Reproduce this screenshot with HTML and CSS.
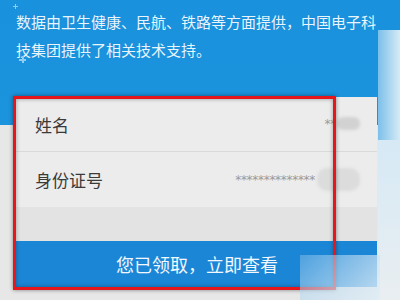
FILE: index.html
```html
<!DOCTYPE html>
<html lang="zh-CN">
  <head>
    <meta charset="UTF-8" />
    <meta name="viewport" content="width=device-width, initial-scale=1.0" />
    <title>健康码领取</title>
    <link rel="stylesheet" href="styles.css">
  </head>
  <body>
    <div class="screen">
      <div class="main">
        <div class="intro">
          <span class="plus plusTop"></span>
          <p>数据由卫生健康、民航、铁路等方面提供，中国电子科技集团提供了相关技术支持。</p>
          <span class="plus plusBottom"></span>
        </div>

        <div class="card">
          <div class="row">
            <span class="label">姓名</span>
            <span class="value">**</span>
            <span class="blur blurSmall"></span>
          </div>
          <div class="row">
            <span class="label">身份证号</span>
            <span class="value">**************</span>
            <span class="blur blurBig"></span>
          </div>
          <div class="spacer"></div>
          <button class="getBtn">您已领取，立即查看</button>

          <div class="markBox"></div>
        </div>
      </div>
      <div class="side"></div>
      <div class="glare"></div>
    </div>
  </body>
</html>
```

FILE: styles.css
```css
* {
  box-sizing: border-box;
}

body {
  margin: 0;
  font-family: "Noto Sans CJK SC", "Noto Sans", sans-serif;
}

.screen {
  position: relative;
  display: flex;
  width: 400px;
  height: 300px;
  overflow: hidden;
}

.main {
  width: 378px;
  background: linear-gradient(#1a91dc 0, #1c93dd 125px, #e7e7e7 125px);
}

.side {
  flex: 1;
  background: linear-gradient(#1a91dc 0, #1a91dc 30px, transparent 30px),
    linear-gradient(90deg, #7cbfe9, #d6ebf7);
  position: relative;
}
.side::after {
  content: "";
  position: absolute;
  left: 0;
  right: 0;
  top: 140px;
  bottom: 0;
  background: linear-gradient(#d6e9f5, #e9eef1);
}

.intro {
  position: relative;
  padding: 8px 0 0 16px;
  height: 97px;
}
.intro p {
  margin: 0;
  color: rgba(255, 255, 255, 0.92);
  font-size: 15px;
  line-height: 28px;
}

/* little sparkle crosses on the blue header */
.plus {
  position: absolute;
  width: 5px;
  height: 5px;
  background: linear-gradient(#8fcdf2, #8fcdf2) center / 5px 1px no-repeat,
    linear-gradient(#8fcdf2, #8fcdf2) center / 1px 5px no-repeat;
}
.plusTop {
  left: 13px;
  top: 4px;
}
.plusBottom {
  left: 19px;
  top: 56px;
  width: 7px;
  height: 7px;
  background: linear-gradient(#8fcdf2, #8fcdf2) center / 7px 2px no-repeat,
    linear-gradient(#8fcdf2, #8fcdf2) center / 2px 7px no-repeat;
}

.card {
  position: relative;
  width: 362px;
  margin-left: 15px;
  background: #ececec;
}

.row {
  display: flex;
  align-items: center;
  height: 55px;
  padding: 0 17px 0 20px;
  border-bottom: 1px solid #dadada;
}
.row + .row {
  border-bottom: none;
}
.label {
  flex: 1;
  color: #3a3a3a;
  font-size: 17px;
}
.value {
  color: #9a9a9a;
  font-family: "DejaVu Sans", sans-serif;
  font-size: 12px;
  letter-spacing: -0.3px;
}

.blur {
  background: #d2d2d2;
  filter: blur(1.5px);
  border-radius: 6px;
}
.blurSmall {
  width: 23px;
  height: 13px;
  margin-left: 1px;
  margin-top: -2px;
}
.blurBig {
  width: 43px;
  height: 23px;
  margin-left: 2px;
  background: #dcdcdc;
  border-radius: 10px;
}

.spacer {
  height: 34px;
  background: #e3e3e3;
}

.getBtn {
  display: block;
  width: 100%;
  height: 46px;
  border: none;
  background: #1c86d6;
  color: #f2f8fd;
  font-family: inherit;
  font-size: 18px;
  padding: 0 0 0 2px;
}

.markBox {
  position: absolute;
  left: -2px;
  top: -1px;
  width: 323px;
  height: 194px;
  border: 3px solid #e5161c;
  box-shadow: 0 0 4px rgba(0, 0, 0, 0.45), inset 0 0 4px rgba(0, 0, 0, 0.35);
}

.glare {
  position: absolute;
  left: 300px;
  top: 255px;
  width: 80px;
  height: 45px;
  background: linear-gradient(135deg, rgba(140, 195, 235, 0.45), rgba(225, 238, 246, 0.85));
}
```
